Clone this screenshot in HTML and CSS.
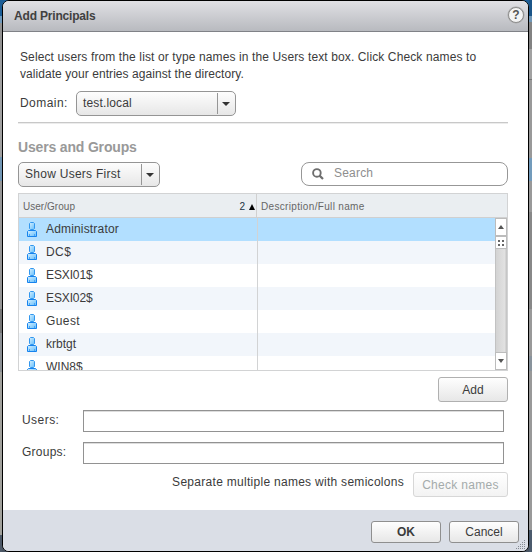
FILE: index.html
```html
<!DOCTYPE html>
<html lang="en">
<head>
<meta charset="utf-8">
<title>Add Principals</title>
<link rel="stylesheet" href="styles.css">
</head>
<body>
<svg class="defs" aria-hidden="true">
  <defs>
    <linearGradient id="skin" x1="0" y1="0" x2="1" y2="1"><stop offset="0" stop-color="#d4f0ff"/><stop offset="1" stop-color="#64bdfb"/></linearGradient>
    <symbol id="user" viewBox="0 0 12 16">
      <path d="M1.500 14.500V9.500L2.500 8.500H9.500L10.500 9.500V14.500Z" fill="url(#skin)" stroke="#1683ee"/>
      <path d="M3.500 1.500L4.500 .5H7.500L8.500 1.500V6.500L7.500 7.500H4.500L3.500 6.500Z" fill="url(#skin)" stroke="#3297ee"/>
      <path d="M3.500 12V14M8.500 12V14" stroke="#4aa5f4"/>
    </symbol>
  </defs>
</svg>
<div class="edge left"></div>
<section class="dialog">
  <header class="title"><span class="t-title">Add Principals</span><span class="help">?</span></header>
  <main class="content">
    <p class="intro"><span class="t-line1">Select users from the list or type names in the Users text box. Click Check names to</span><br><span class="t-line2">validate your entries against the directory.</span></p>
    <div class="domain"><span class="t-domain">Domain:</span><div class="select wide"><span class="t-local">test.local</span><i class="arrow"></i></div></div>
    <hr>
    <h2><span class="t-heading">Users and Groups</span></h2>
    <div class="filters">
      <div class="select"><span class="t-show">Show Users First</span><i class="arrow"></i></div>
      <div class="search">
        <svg width="12" height="12" viewBox="0 0 12 12" fill="none" stroke="#6e6e6e"><circle cx="4.900" cy="4.900" r="3.800" stroke-width="1.900"/><path d="M7.600 7.600L11 11" stroke-width="2.200"/></svg>
        <span class="t-search">Search</span>
      </div>
    </div>
    <div class="table">
      <div class="thead"><div class="th first"><span class="t-ug">User/Group</span><span class="sort">2<i></i></span></div><div class="th"><span class="t-desc">Description/Full name</span></div></div>
      <div class="tbody">
        <div class="rows">
          <div class="row selected"><div class="cell"><svg viewBox="0 0 12 16"><use href="#user" width="12" height="16"/></svg><span class="n1">Administrator</span></div></div>
          <div class="row"><div class="cell"><svg viewBox="0 0 12 16"><use href="#user" width="12" height="16"/></svg><span class="n2">DC$</span></div></div>
          <div class="row"><div class="cell"><svg viewBox="0 0 12 16"><use href="#user" width="12" height="16"/></svg><span class="n3">ESXI01$</span></div></div>
          <div class="row"><div class="cell"><svg viewBox="0 0 12 16"><use href="#user" width="12" height="16"/></svg><span class="n3">ESXI02$</span></div></div>
          <div class="row"><div class="cell"><svg viewBox="0 0 12 16"><use href="#user" width="12" height="16"/></svg><span class="n5">Guest</span></div></div>
          <div class="row"><div class="cell"><svg viewBox="0 0 12 16"><use href="#user" width="12" height="16"/></svg><span>krbtgt</span></div></div>
          <div class="row"><div class="cell"><svg viewBox="0 0 12 16"><use href="#user" width="12" height="16"/></svg><span>WIN8$</span></div></div>
        </div>
        <div class="scrollbar">
          <div class="sb up"><i></i></div>
          <div class="thumb"><i></i><i></i><i></i><i></i></div>
          <div class="sb down"><i></i></div>
        </div>
      </div>
    </div>
    <div class="btn add"><span class="t-add">Add</span></div>
    <div class="field"><label class="t-users">Users:</label><div class="input"></div></div>
    <div class="field"><label class="t-groups">Groups:</label><div class="input"></div></div>
    <div class="check"><span class="hint">Separate multiple names with semicolons</span><div class="btn disabled"><span class="t-check">Check names</span></div></div>
  </main>
  <footer><div class="btn action"><b class="t-ok">OK</b></div><div class="btn action"><span class="t-cancel">Cancel</span></div>
    <svg class="grip" width="10" height="10" fill="#858a92"><path d="M8 0h1v1h-1zM6 2h1v1h-1zM8 2h1v1h-1zM4 4h1v1h-1zM6 4h1v1h-1zM8 4h1v1h-1zM2 6h1v1h-1zM4 6h1v1h-1zM6 6h1v1h-1zM8 6h1v1h-1zM0 8h1v1h-1zM2 8h1v1h-1zM4 8h1v1h-1zM6 8h1v1h-1zM8 8h1v1h-1z"/></svg>
  </footer>
</section>
<div class="edge right"></div>
</body>
</html>
```
FILE: styles.css
```css
* { box-sizing: border-box; }
body { margin: 0; width: 532px; height: 552px; overflow: hidden; display: flex; font: 12px/17px "Liberation Sans", Arial, sans-serif; color: #3b3b3b; background: linear-gradient(#1c5e97 0 16px, #6791b5 16px 22px, #777 22px 50px, #999 50px 500px, #485361 500px); }
span, label, b { white-space: nowrap; }
.defs { position: absolute; width: 0; height: 0; }
.edge { flex: none; }
.left { width: 2px; background: linear-gradient(#1c5e97 0 16px, #6f9abd 16px 23px, #929292 23px 50px, #a0a0a0 50px 157px, #7196b4 157px 181px, #969696 181px 309px, #777 309px 333px, #8b8f93 333px 372px, #a1a19c 372px 535px, #4d5968 535px); }
.right { width: 3px; background: linear-gradient(#1b5588 0 16px, #6f96b6 16px 22px, #828282 22px 49px, #a1a1a1 49px 79px, #777 79px 80px, #999 80px 158px, #739bbb 158px 181px, #999 181px 212px, #888 212px 309px, #999 309px 356px, #89939c 356px 371px, #999 371px 530px, #4b5a6c 530px); }
.dialog { width: 527px; height: 552px; border: 1px solid #000; border-radius: 7px; overflow: hidden; background: #fff; display: flex; flex-direction: column; }
.title { height: 31px; flex: none; display: flex; align-items: center; justify-content: space-between; padding: 0 4px 0 11px; background: linear-gradient(#e0e0e4, #b8babf); border-bottom: 1px solid #808287; font-weight: bold; color: #404040; }
.help { width: 16px; height: 16px; border: 1px solid #8d8d8d; border-radius: 50%; background: #f4f4f4; box-shadow: 0 0 0 .5px #aaa; font: bold 12px/14px "Liberation Sans", sans-serif; text-align: center; color: #555; margin-top: -2px; }
.t-title { letter-spacing: -.18px; }
.t-line1 { letter-spacing: .12px; }
.t-line2 { letter-spacing: .06px; }
.t-domain { letter-spacing: .45px; }
.t-local { letter-spacing: .15px; }
.t-heading { letter-spacing: -.17px; }
.t-show { letter-spacing: .27px; }
.t-search { letter-spacing: .2px; }
.t-desc { letter-spacing: .33px; }
.t-ug { letter-spacing: .03px; }
.n1 { letter-spacing: .17px; }
.n2 { letter-spacing: .4px; }
.n3 { letter-spacing: -.12px; }
.n5 { letter-spacing: .4px; }
.t-users { letter-spacing: .45px; }
.t-groups { letter-spacing: .25px; }
.hint { letter-spacing: .285px; }
.t-check { letter-spacing: .3px; }
.content { height: 478px; flex: none; padding: 17px 20px 0 15px; display: flex; flex-direction: column; }
.intro { margin: 0 0 0 2px; height: 42px; }
.domain { display: flex; align-items: center; gap: 9px; height: 25px; padding-left: 2px; }
.domain > span { width: 47px; }
.select { width: 142px; height: 25px; border: 1px solid #959595; border-radius: 5px; background: linear-gradient(#fdfdfd, #e7e7e7); display: flex; align-items: center; justify-content: space-between; padding-left: 6px; }
.wide { width: 160px; }
.arrow { width: 18px; height: 21px; border-left: 1px solid #969696; display: grid; place-items: center; }
.arrow::after { content: ""; border: 4px solid transparent; border-top-color: #333; border-bottom: 0; margin-right: 1px; margin-top: 1px; }
hr { width: 490px; height: 2px; flex: none; margin: 6px 0 0; border: 0; border-top: 1px solid #c8c8c8; background: #ececec; }
h2 { margin: 14px 0 0; height: 24px; font-size: 14px; line-height: 18px; color: #999; }
.filters { display: flex; justify-content: space-between; height: 25px; }
.search { width: 207px; height: 24px; border: 1px solid #979797; border-radius: 8px; display: flex; align-items: center; gap: 10px; padding-left: 10px; color: #8e8e8e; }
.search span { margin-top: -2px; }
.table { height: 178px; flex: none; margin-top: 6px; border: 1px solid #d2d3d4; }
.thead { display: flex; height: 24px; background: #eaeef1; border-bottom: 1px solid #d0d0d0; font-size: 10px; color: #666; }
.th { padding: 4px 0 0 4px; flex: 1; }
.first { flex: none; width: 238px; border-right: 1px solid #d0d0d0; display: flex; justify-content: space-between; padding-right: 1px; }
.sort { height: 17px; color: #234; display: flex; align-items: center; gap: 4px; }
.sort i { border: 3px solid transparent; border-bottom: 6px solid #000; border-top: 0; }
.tbody { display: flex; height: 152px; overflow: hidden; }
.rows { flex: 1; }
.row { height: 23px; background: #fff; }
.row:nth-child(even) { background: #f2f6fb; }
.row.selected { background: #b2dfff; }
.cell { width: 239px; height: 23px; border-right: 1px solid #d2d3d4; display: flex; align-items: center; padding-left: 7px; gap: 8px; }
.cell svg { width: 12px; height: 16px; flex: none; margin-top: 1px; }
.scrollbar { width: 12px; flex: none; display: flex; flex-direction: column; background: linear-gradient(90deg, #c2c2c2 1px, #d3d3d3 1px, #e2e2e2 10px, #c6c6c6 11px); }
.sb, .thumb { border: 1px solid #bcbcbc; background: #fff; flex: none; display: grid; place-items: center; }
.sb { height: 18px; }
.sb i { border: 3px solid transparent; border-bottom: 4px solid #555; border-top: 0; }
.down { margin-top: auto; }
.down i { border-bottom: 0; border-top: 4px solid #555; }
.thumb { height: 13px; grid-template-columns: 2px 2px; grid-template-rows: 2px 2px; gap: 2px; place-content: center; }
.thumb i { width: 2px; height: 2px; background: #666; }
.btn { height: 25px; border: 1px solid #b0b0b0; border-radius: 3px; background: linear-gradient(#fefefe, #e7e7e7); display: flex; align-items: center; justify-content: center; flex: none; }
.add { width: 70px; margin: 6px 0 0 auto; padding-top: 1px; }
.field { display: flex; justify-content: space-between; height: 22px; flex: none; margin: 8px 4px 0; }
.field + .field { margin-top: 10px; }
.field label { padding-top: 2px; }
.input { width: 421px; height: 22px; border: 1px solid #929292; box-shadow: inset 0 1px #ddd; }
.check { display: flex; justify-content: flex-end; gap: 9px; margin-top: 8px; }
.hint { padding-top: 2px; }
.disabled { width: 95px; padding-top: 1px; border-color: #d7d7d7; background: linear-gradient(#fff, #f3f3f3); color: #a4abab; }
footer { flex: 1; display: flex; justify-content: flex-end; gap: 8px; padding: 11px 9px 0 0; background: #dadee6; position: relative; }
.action { width: 70px; height: 22px; border-color: #8f8f8f; }
.grip { position: absolute; right: 2px; bottom: 1px; }
```
